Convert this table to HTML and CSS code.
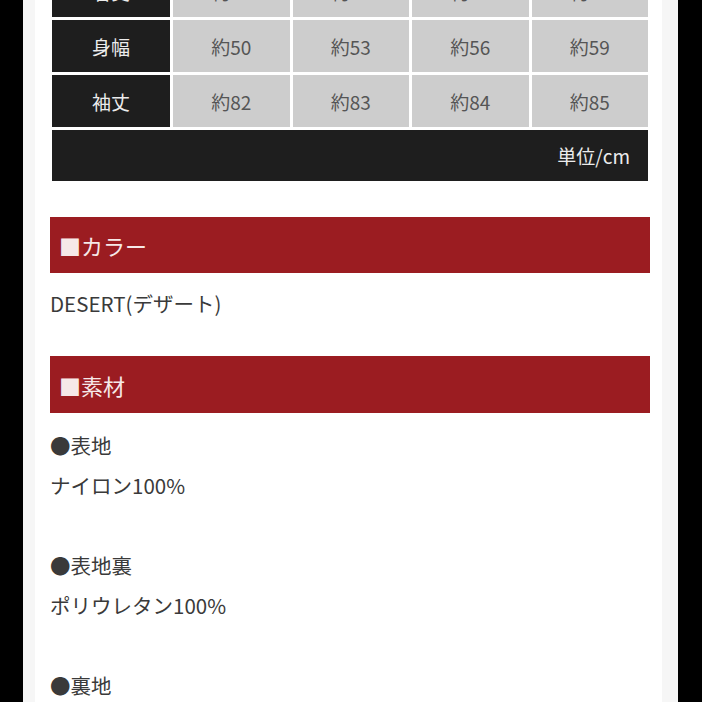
FILE: index.html
```html
<!DOCTYPE html>
<html lang="ja">
<head>
<meta charset="utf-8">
<link rel="stylesheet" href="styles.css">
</head>
<body>
<div class="page">
  <div class="inner">
    <div class="size-table">
      <div class="th">着丈</div><div class="td">約71</div><div class="td">約73</div><div class="td">約75</div><div class="td">約77</div>
      <div class="th">身幅</div><div class="td">約50</div><div class="td">約53</div><div class="td">約56</div><div class="td">約59</div>
      <div class="th">袖丈</div><div class="td">約82</div><div class="td">約83</div><div class="td">約84</div><div class="td">約85</div>
      <div class="unit">単位/cm</div>
    </div>

    <div class="sec-head">■カラー</div>
    <p class="line color-line">DESERT(デザート)</p>

    <div class="sec-head sec-material">■素材</div>
    <div class="material">
      <p class="line">●表地</p>
      <p class="line">ナイロン100%</p>
      <p class="line blank"></p>
      <p class="line">●表地裏</p>
      <p class="line">ポリウレタン100%</p>
      <p class="line blank"></p>
      <p class="line">●裏地</p>
      <p class="line">ポリエステル100%</p>
    </div>
  </div>
</div>
</body>
</html>
```

FILE: styles.css
```css
html, body {
  margin: 0;
  padding: 0;
  background: #000;
  height: 702px;
  overflow: hidden;
}
body {
  font-family: "Noto Sans CJK JP", "Noto Sans", sans-serif;
  color: #3a3a3a;
}
.page {
  margin-left: 23px;
  width: 655px;
  height: 702px;
  background: #f6f6f6;
  padding: 0 16px 0 12px;
  box-sizing: border-box;
  overflow: hidden;
}
.inner {
  background: #fff;
  min-height: 800px;
  padding: 0 12px 0 15px;
}
.size-table {
  margin: -35px 2px 0 2px;
  display: grid;
  grid-template-columns: 118px repeat(4, 1fr);
  grid-auto-rows: 52px;
  gap: 3px;
  font-size: 19px;
}
.th, .td, .unit {
  display: flex;
  align-items: center;
  justify-content: center;
}
.th {
  background: #1e1e1e;
  color: #ececec;
}
.td {
  background: #cdcdcd;
  color: #555;
}
.unit {
  grid-column: 1 / -1;
  background: #1e1e1e;
  color: #ececec;
  justify-content: flex-end;
  padding-right: 18px;
  height: 51px;
}
.sec-head {
  margin-top: 35px;
  height: 56px;
  background: #9b1c21;
  color: #f6e8e8;
  font-size: 22px;
  display: flex;
  align-items: center;
  padding-left: 9px;
}
.sec-material {
  margin-top: 33px;
  height: 57px;
}
.line {
  margin: 0;
  font-size: 20.5px;
  line-height: 40px;
  height: 40px;
}
.color-line {
  margin-top: 10px;
}
.material {
  margin-top: 12px;
}
```
